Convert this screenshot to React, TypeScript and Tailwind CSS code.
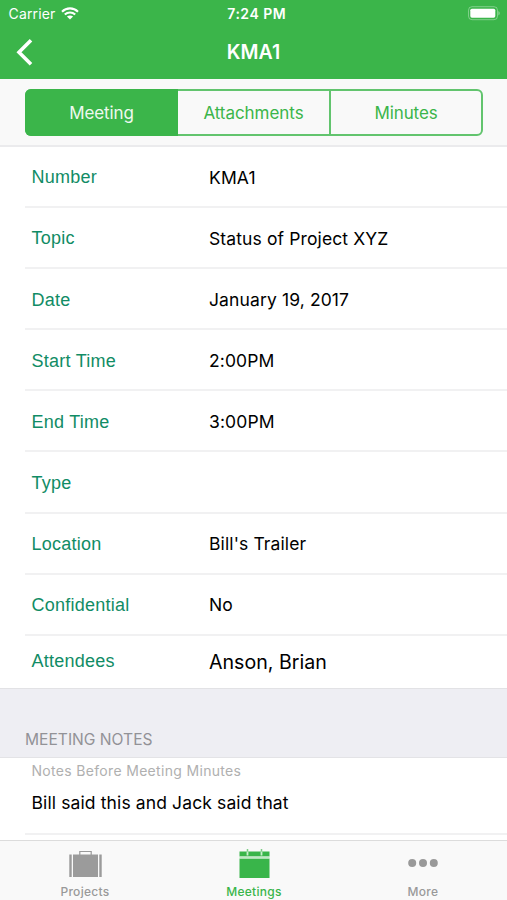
import React from "react";

type Field = { label: string; value: string };

const fields: Field[] = [
  { label: "Number", value: "KMA1" },
  { label: "Topic", value: "Status of Project XYZ" },
  { label: "Date", value: "January 19, 2017" },
  { label: "Start Time", value: "2:00PM" },
  { label: "End Time", value: "3:00PM" },
  { label: "Type", value: "" },
  { label: "Location", value: "Bill's Trailer" },
  { label: "Confidential", value: "No" },
];

function StatusBar() {
  return (
    <div className="grid h-7 grid-cols-3 items-center pl-[8.5px] pr-[7px] text-[14px] leading-7">
      <div className="flex items-center gap-[6px]">
        <span className="tracking-[0.15px]">Carrier</span>
        <svg className="-mt-0.5" width="18" height="13" viewBox="0 0 18 13" fill="none" stroke="white" strokeWidth="2.1">
          <path d="M1 4.7C5.5.2 12.5.2 17 4.7" />
          <path d="M3.8 7.6c3-2.9 7.4-2.9 10.4 0" />
          <path d="M9 12.6 5.9 9.6c1.8-1.6 4.4-1.6 6.2 0z" fill="white" stroke="none" />
        </svg>
      </div>
      <span className="pl-[5px] text-center font-semibold tracking-[0.5px]">7:24 PM</span>
      <svg className="-mt-px justify-self-end" width="32" height="15" viewBox="0 0 32 15">
        <rect x="0.5" y="0.7" width="29" height="13" rx="3.5" fill="none" stroke="white" strokeOpacity=".35" />
        <rect x="2.3" y="2.7" width="25" height="9" rx="1.6" fill="white" />
        <path d="M30.5 5v4.5c1.5-.7 1.5-3.8 0-4.5z" fill="white" fillOpacity=".5" />
      </svg>
    </div>
  );
}

function Tab({ label, active, children }: { label: string; active?: boolean; children: React.ReactNode }) {
  return (
    <div className={`flex flex-1 flex-col items-center ${active ? "text-[#39b54a]" : "text-[#999999]"}`}>
      <div className="flex h-[43px] items-center pl-px">{children}</div>
      <span className="pl-px text-[12px] font-medium leading-[14px] tracking-[0.3px]">{label}</span>
    </div>
  );
}

export default function App() {
  return (
    <div className="flex h-[900px] w-[507px] flex-col overflow-hidden bg-white font-['Inter','Liberation_Sans',sans-serif] text-black">
      <header className="h-[79px] shrink-0 bg-[#3bb54a] text-white">
        <StatusBar />
        <div className="grid h-12 grid-cols-3 items-center px-4">
          <svg width="18" height="28" viewBox="0 0 18 28" fill="none" stroke="white" strokeWidth="3.6">
            <path d="M15 2.2 3 14.2l12 12" />
          </svg>
          <h1 className="pt-[2px] text-center text-[19.5px] font-semibold">KMA1</h1>
        </div>
      </header>

      <div className="h-[68px] shrink-0 border-b-2 border-[#ebebed] bg-[#f9f9f9] pl-[25px] pr-6 pt-[10px]">
        <div className="flex h-[47px] rounded-[6px] border-2 border-[#62c46e] text-center text-[17px] leading-[45px] text-[#3bb54a]">
          <div className="-my-0.5 -ml-0.5 w-[153px] rounded-l-[6px] bg-[#3bb54a] pt-0.5 tracking-[-0.1px] text-[#eef9ef]">Meeting</div>
          <div className="w-[153px] border-r-2 border-[#62c46e] tracking-[-0.05px]">Attachments</div>
          <div className="flex-1 tracking-[-0.1px]">Minutes</div>
        </div>
      </div>

      <main className="h-[693px] shrink-0 overflow-hidden">
        {fields.map((f) => (
          <div key={f.label} className="ml-[25px] flex h-[61.1px] items-center border-b-2 border-[#f1f1f2] pl-[6px] pt-[2.6px]">
            <span className="w-[178px] pl-[0.5px] font-['Liberation_Sans',sans-serif] text-[18px] tracking-[0.25px] text-[#118c65]">{f.label}</span>
            <span className="text-[17.5px] tracking-[0.12px]">{f.value}</span>
          </div>
        ))}
        <div className="flex h-[53.2px] items-center border-b border-[#e2e2e5] pl-[31px]">
          <span className="w-[178px] pl-[0.5px] font-['Liberation_Sans',sans-serif] text-[18px] tracking-[0.25px] text-[#118c65]">Attendees</span>
          <span className="pt-[2px] text-[19.6px]">Anson, Brian</span>
        </div>
        <div className="flex h-[69px] items-end border-b border-[#e3e3e6] bg-[#eeeef3] pb-[5px] pl-[25px] text-[15.6px] leading-6 text-[#929297]">
          MEETING NOTES
        </div>
        <div className="ml-[25px] h-[77px] border-b-2 border-[#f1f1f2] pl-[6.5px] pt-[3px]">
          <p className="text-[14px] leading-[19px] tracking-[0.32px] text-[#b0b0b0]">Notes Before Meeting Minutes</p>
          <p className="pt-[11px] text-[17.5px] leading-6 tracking-[0.12px]">Bill said this and Jack said that</p>
        </div>
      </main>

      <nav className="flex h-[60px] shrink-0 border-t border-[#dcdcdc] bg-[#f9f9f9] pt-px">
        <Tab label="Projects">
          <svg width="33" height="28" viewBox="0 0 33 28">
            <path d="M10.8 5V1.5h11.4V5" fill="none" stroke="#999" strokeWidth="1.2" />
            <path d="M.3 4.5h2.4V27H.3zM4 4.5h25V27H4zM30.3 4.5h2.4V27h-2.4z" fill="#9b9b9b" />
          </svg>
        </Tab>
        <Tab label="Meetings" active>
          <svg width="31" height="30" viewBox="0 0 31 30">
            <path d="M.5 2.5h30v5H.5zM.5 9.5h30V29H.5z" fill="#39b54a" />
            <path d="M.5 7.5h30v2H.5z" fill="#bfe8c4" />
            <path d="M8.5 2.5v4M22.5 2.5v4" stroke="#c9efcd" strokeWidth="1.8" />
            <path d="M8.5 0v2.5M22.5 0v2.5" stroke="#7bcd85" strokeWidth="1.5" />
          </svg>
        </Tab>
        <Tab label="More">
          <svg width="30" height="9" viewBox="0 0 30 9" fill="#999">
            <circle cx="4.2" cy="4" r="4" />
            <circle cx="15" cy="4" r="4" />
            <circle cx="25.8" cy="4" r="4" />
          </svg>
        </Tab>
      </nav>
    </div>
  );
}
